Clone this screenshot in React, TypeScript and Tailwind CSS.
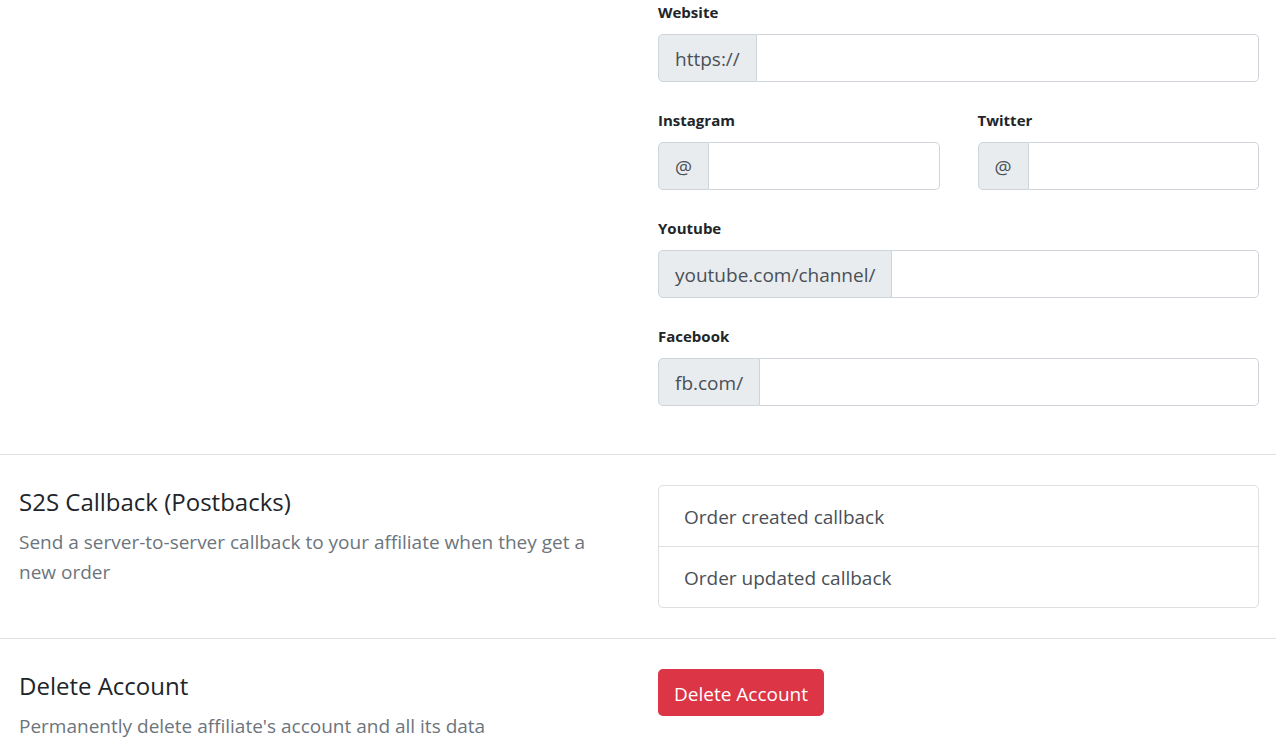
import React from 'react';

const FONT = { fontFamily: '"Open Sans", "Noto Sans", sans-serif' };

function Label({ children }: { children: React.ReactNode }) {
  return <div className="mb-[11px] text-[15px] font-bold leading-[22px] text-[#212529]">{children}</div>;
}

function PrefixInput({ prefix }: { prefix: string }) {
  return (
    <div className="flex h-[48px] w-full">
      <span className="flex items-center whitespace-nowrap rounded-l-[5px] border border-[#ced4da] bg-[#e9ecef] px-4 pt-[2px] text-[19px] text-[#495057]">
        {prefix}
      </span>
      <input
        type="text"
        className="min-w-0 flex-1 rounded-r-[5px] border border-l-0 border-[#ced4da] bg-white px-4 text-[19px] text-[#495057] outline-none"
      />
    </div>
  );
}

function SectionInfo({ title, text }: { title: string; text: string }) {
  return (
    <div>
      <h3 className="text-[24px] leading-[34px] font-normal text-[#212529]">{title}</h3>
      <p className="mt-[8px] text-[19px] leading-[30px] text-[#6c757d]">{text}</p>
    </div>
  );
}

export default function App() {
  return (
    <div className="min-h-screen w-full bg-white" style={FONT}>
      {/* Social links */}
      <div className="grid grid-cols-2 gap-x-[38px] pl-[19px] pr-[17px] pt-[1px] pb-[20px]">
        <div />
        <div className="flex flex-col gap-[27px]">
          <div>
            <Label>Website</Label>
            <PrefixInput prefix="https://" />
          </div>
          <div className="grid grid-cols-2 gap-x-[38px]">
            <div>
              <Label>Instagram</Label>
              <PrefixInput prefix="@" />
            </div>
            <div>
              <Label>Twitter</Label>
              <PrefixInput prefix="@" />
            </div>
          </div>
          <div>
            <Label>Youtube</Label>
            <PrefixInput prefix="youtube.com/channel/" />
          </div>
          <div className="mb-[28px]">
            <Label>Facebook</Label>
            <PrefixInput prefix="fb.com/" />
          </div>
        </div>
      </div>

      {/* S2S callbacks */}
      <div className="grid grid-cols-2 gap-x-[38px] border-t border-[#dee2e6] pl-[19px] pr-[17px] py-[30px]">
        <SectionInfo
          title="S2S Callback (Postbacks)"
          text="Send a server-to-server callback to your affiliate when they get a new order"
        />
        <div className="overflow-hidden rounded-[5px] border border-[#dfdfdf]">
          <div className="flex h-[61px] items-center border-b border-[#dfdfdf] px-[25px] pt-[3px] text-[19px] text-[#495057]">
            Order created callback
          </div>
          <div className="flex h-[60px] items-center px-[25px] pt-[3px] text-[19px] text-[#495057]">
            Order updated callback
          </div>
        </div>
      </div>

      {/* Delete account */}
      <div className="grid grid-cols-2 gap-x-[38px] border-t border-[#dee2e6] pl-[19px] pr-[17px] py-[30px]">
        <SectionInfo title="Delete Account" text="Permanently delete affiliate's account and all its data" />
        <div>
          <button className="h-[47px] rounded-[5px] bg-[#dc3545] px-4 pt-[3px] text-[19px] text-white">
            Delete Account
          </button>
        </div>
      </div>
    </div>
  );
}
